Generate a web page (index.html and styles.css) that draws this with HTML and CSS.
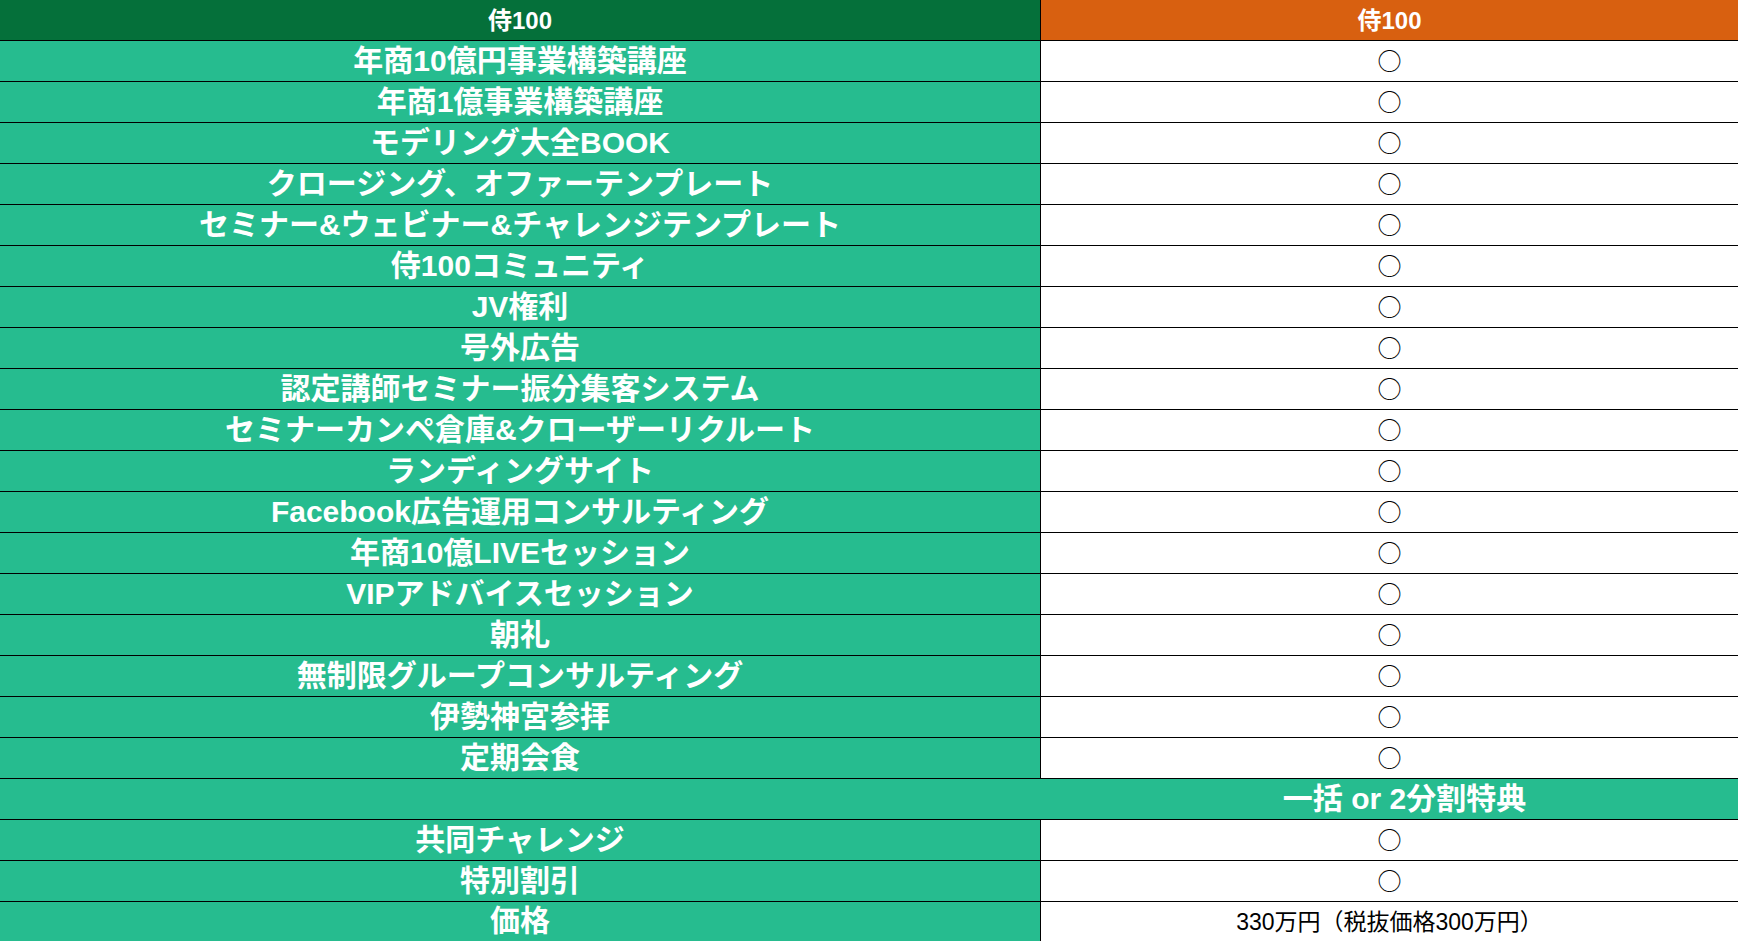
FILE: index.html
```html
<!DOCTYPE html>
<html lang="ja">
<head>
<meta charset="utf-8">
<title>侍100</title>
<link rel="stylesheet" href="styles.css">
</head>
<body>
<div class="table">
  <div class="row head">
    <div class="cell name head-left">侍100</div>
    <div class="cell val head-right">侍100</div>
  </div>
  <div class="row"><div class="cell name">年商10億円事業構築講座</div><div class="cell val"><span class="mark">○</span></div></div>
  <div class="row"><div class="cell name">年商1億事業構築講座</div><div class="cell val"><span class="mark">○</span></div></div>
  <div class="row"><div class="cell name">モデリング大全BOOK</div><div class="cell val"><span class="mark">○</span></div></div>
  <div class="row"><div class="cell name">クロージング、オファーテンプレート</div><div class="cell val"><span class="mark">○</span></div></div>
  <div class="row"><div class="cell name">セミナー&amp;ウェビナー&amp;チャレンジテンプレート</div><div class="cell val"><span class="mark">○</span></div></div>
  <div class="row"><div class="cell name">侍100コミュニティ</div><div class="cell val"><span class="mark">○</span></div></div>
  <div class="row"><div class="cell name">JV権利</div><div class="cell val"><span class="mark">○</span></div></div>
  <div class="row"><div class="cell name">号外広告</div><div class="cell val"><span class="mark">○</span></div></div>
  <div class="row"><div class="cell name">認定講師セミナー振分集客システム</div><div class="cell val"><span class="mark">○</span></div></div>
  <div class="row"><div class="cell name">セミナーカンペ倉庫&amp;クローザーリクルート</div><div class="cell val"><span class="mark">○</span></div></div>
  <div class="row"><div class="cell name">ランディングサイト</div><div class="cell val"><span class="mark">○</span></div></div>
  <div class="row"><div class="cell name">Facebook広告運用コンサルティング</div><div class="cell val"><span class="mark">○</span></div></div>
  <div class="row"><div class="cell name">年商10億LIVEセッション</div><div class="cell val"><span class="mark">○</span></div></div>
  <div class="row"><div class="cell name">VIPアドバイスセッション</div><div class="cell val"><span class="mark">○</span></div></div>
  <div class="row"><div class="cell name">朝礼</div><div class="cell val"><span class="mark">○</span></div></div>
  <div class="row"><div class="cell name">無制限グループコンサルティング</div><div class="cell val"><span class="mark">○</span></div></div>
  <div class="row"><div class="cell name">伊勢神宮参拝</div><div class="cell val"><span class="mark">○</span></div></div>
  <div class="row"><div class="cell name">定期会食</div><div class="cell val"><span class="mark">○</span></div></div>
  <div class="row section">
    <div class="cell name section-left"></div>
    <div class="cell val section-right">一括 or 2分割特典</div>
  </div>
  <div class="row"><div class="cell name">共同チャレンジ</div><div class="cell val"><span class="mark">○</span></div></div>
  <div class="row"><div class="cell name">特別割引</div><div class="cell val"><span class="mark">○</span></div></div>
  <div class="row price-row"><div class="cell name">価格</div><div class="cell val price">330万円（税抜価格300万円）</div></div>
</div>
</body>
</html>
```
FILE: styles.css
```css
html, body {
  margin: 0;
  padding: 0;
  background: #ffffff;
}
body {
  font-family: "Liberation Sans", "Noto Sans CJK JP", sans-serif;
  overflow: hidden;
}
.table {
  display: flex;
  flex-direction: column;
  width: 1738px;
}
.row {
  display: grid;
  grid-template-columns: 1041px 1fr;
  height: 41px;
  box-sizing: border-box;
  border-bottom: 1px solid #000;
}
.cell {
  display: flex;
  align-items: center;
  justify-content: center;
  height: 40px;
  box-sizing: border-box;
  padding-bottom: 1px;
  white-space: nowrap;
  overflow: visible;
}
.name {
  border-right: 1px solid #000;
  background: #26bc8f;
  color: #ffffff;
  font-weight: 700;
  font-size: 30px;
  line-height: 36px;
}
.val {
  background: #ffffff;
  color: #000;
}
.head-left {
  background: #05703a;
  font-size: 24px;
  line-height: 36px;
  padding-bottom: 0;
  padding-top: 1px;
}
.head-right {
  background: #d86010;
  color: #ffffff;
  font-weight: 700;
  font-size: 24px;
  line-height: 36px;
  padding-bottom: 0;
  padding-top: 1px;
}
.mark {
  font-family: "Noto Sans CJK JP", sans-serif;
  font-size: 24px;
  line-height: 36px;
  font-weight: 400;
}
.val:has(.mark) {
  padding-bottom: 2px;
}
.section-left {
  border-right: none;
}
.section-right {
  background: #26bc8f;
  color: #ffffff;
  font-weight: 700;
  font-size: 30px;
  line-height: 36px;
  padding-left: 30px;
}
.price {
  font-size: 23px;
  font-weight: 400;
}
.price-row .cell {
  align-items: flex-start;
  padding-top: 1px;
  padding-bottom: 0;
}
```
